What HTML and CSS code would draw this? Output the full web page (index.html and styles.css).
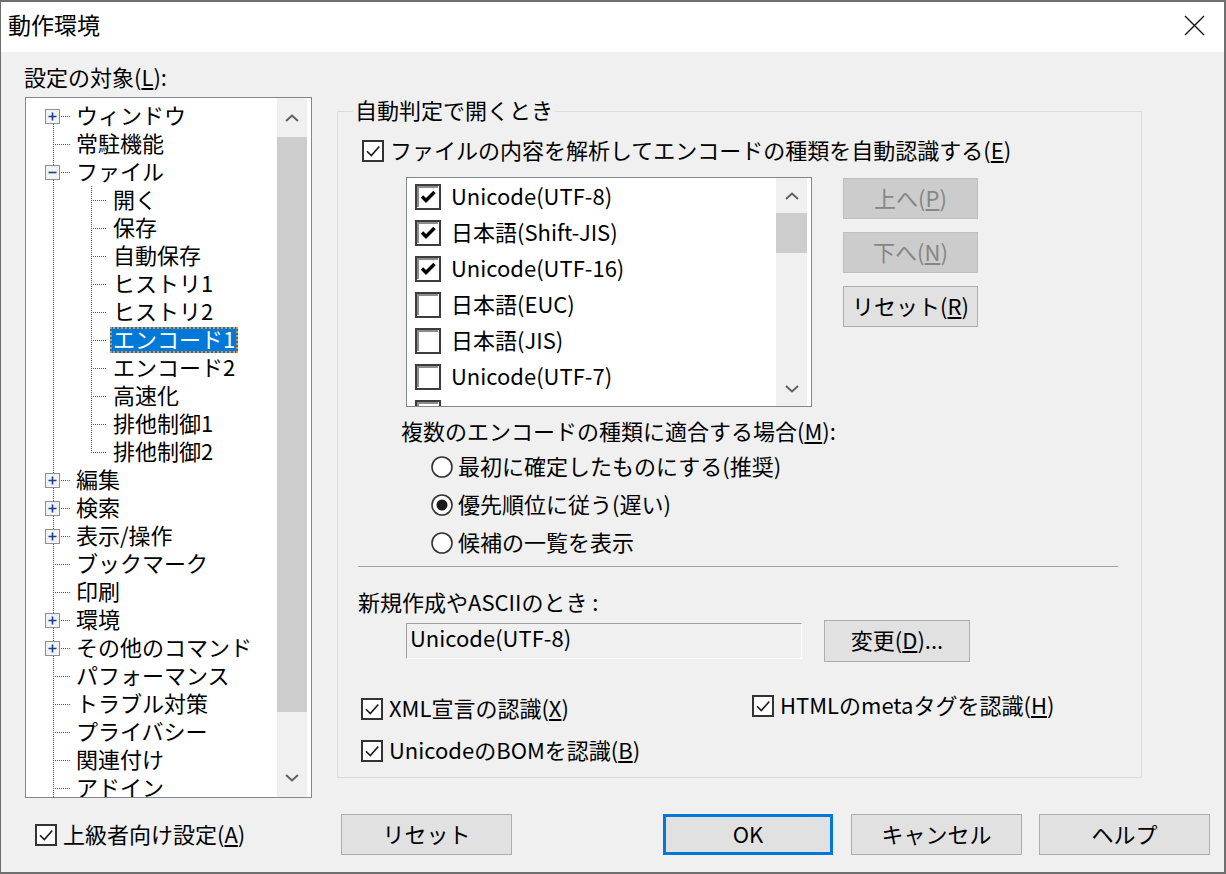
FILE: index.html
```html
<!DOCTYPE html>
<html lang="ja">

<head>
    <meta charset="UTF-8">
    <title>動作環境</title>
    <link rel="stylesheet" href="styles.css">
</head>

<body>
    <svg class="defs" width="0" height="0">
        <symbol id="cb-on" viewBox="0 0 22 22">
            <rect x="1" y="1" width="20" height="20" fill="#fff" stroke="#333" stroke-width="2"/>
            <path d="M5 11.2L9.3 15.5L17.3 6.5" fill="none" stroke="#1a1a1a" stroke-width="1.6"/>
        </symbol>
        <symbol id="cb3d-on" viewBox="0 0 26 26">
            <rect x="1" y="1" width="24" height="24" fill="#fff" stroke="#3c3c3c" stroke-width="2"/>
            <path d="M3 23V3H23" fill="none" stroke="#8c8c8c" stroke-width="2"/>
            <path d="M7 12.5L11 16.5L19.5 8" fill="none" stroke="#000" stroke-width="3.4"/>
        </symbol>
        <symbol id="cb3d-off" viewBox="0 0 26 26">
            <rect x="1" y="1" width="24" height="24" fill="#fff" stroke="#3c3c3c" stroke-width="2"/>
            <path d="M3 23V3H23" fill="none" stroke="#8c8c8c" stroke-width="2"/>
        </symbol>
        <symbol id="radio-off" viewBox="0 0 22 22">
            <circle cx="11" cy="11" r="10" fill="#fff" stroke="#333" stroke-width="1.6"/>
        </symbol>
        <symbol id="radio-on" viewBox="0 0 22 22">
            <circle cx="11" cy="11" r="10" fill="#fff" stroke="#333" stroke-width="1.6"/>
            <circle cx="11" cy="11" r="5.5" fill="#1a1a1a"/>
        </symbol>
        <symbol id="plus" viewBox="0 0 15 15">
            <rect x="0.5" y="0.5" width="14" height="14" fill="#f3f3f3" stroke="#8e8f8f"/>
            <path d="M3.5 7.5h8M7.5 3.5v8" stroke="#1f3d8f" stroke-width="1.6"/>
        </symbol>
        <symbol id="minus" viewBox="0 0 15 15">
            <rect x="0.5" y="0.5" width="14" height="14" fill="#f3f3f3" stroke="#8e8f8f"/>
            <path d="M3.5 7.5h8" stroke="#1f3d8f" stroke-width="1.6"/>
        </symbol>
        <symbol id="chev-up" viewBox="0 0 14 8">
            <path d="M1 7L7 1.5L13 7" fill="none" stroke="#606060" stroke-width="2"/>
        </symbol>
        <symbol id="chev-down" viewBox="0 0 14 8">
            <path d="M1 1L7 6.5L13 1" fill="none" stroke="#606060" stroke-width="2"/>
        </symbol>
    </svg>

    <div class="window">
        <div class="titlebar">
            <span class="title">動作環境</span>
            <span class="close">
                <svg width="21" height="21" viewBox="0 0 21 21"><path d="M1 1L20 20M20 1L1 20" stroke="#111" stroke-width="1.4"/></svg>
            </span>
        </div>

        <div class="body">
            <div class="main">
                <div class="left">
                    <div class="caption">設定の対象(<u>L</u>):</div>
                    <div class="tree">
                        <div class="tree-list">
                            <div class="node"><span class="g1 top"><svg class="exp"><use href="#plus"/></svg></span><span class="text">ウィンドウ</span></div>
                            <div class="node"><span class="g1"></span><span class="text">常駐機能</span></div>
                            <div class="node"><span class="g1"><svg class="exp"><use href="#minus"/></svg></span><span class="text">ファイル</span></div>
                            <div class="node"><span class="g1 pass"></span><span class="g2"></span><span class="text">開く</span></div>
                            <div class="node"><span class="g1 pass"></span><span class="g2"></span><span class="text">保存</span></div>
                            <div class="node"><span class="g1 pass"></span><span class="g2"></span><span class="text">自動保存</span></div>
                            <div class="node"><span class="g1 pass"></span><span class="g2"></span><span class="text">ヒストリ1</span></div>
                            <div class="node"><span class="g1 pass"></span><span class="g2"></span><span class="text">ヒストリ2</span></div>
                            <div class="node sel"><span class="g1 pass"></span><span class="g2"></span><span class="text">エンコード1</span></div>
                            <div class="node"><span class="g1 pass"></span><span class="g2"></span><span class="text">エンコード2</span></div>
                            <div class="node"><span class="g1 pass"></span><span class="g2"></span><span class="text">高速化</span></div>
                            <div class="node"><span class="g1 pass"></span><span class="g2"></span><span class="text">排他制御1</span></div>
                            <div class="node"><span class="g1 pass"></span><span class="g2 last"></span><span class="text">排他制御2</span></div>
                            <div class="node"><span class="g1"><svg class="exp"><use href="#plus"/></svg></span><span class="text">編集</span></div>
                            <div class="node"><span class="g1"><svg class="exp"><use href="#plus"/></svg></span><span class="text">検索</span></div>
                            <div class="node"><span class="g1"><svg class="exp"><use href="#plus"/></svg></span><span class="text">表示/操作</span></div>
                            <div class="node"><span class="g1"></span><span class="text">ブックマーク</span></div>
                            <div class="node"><span class="g1"></span><span class="text">印刷</span></div>
                            <div class="node"><span class="g1"><svg class="exp"><use href="#plus"/></svg></span><span class="text">環境</span></div>
                            <div class="node"><span class="g1"><svg class="exp"><use href="#plus"/></svg></span><span class="text">その他のコマンド</span></div>
                            <div class="node"><span class="g1"></span><span class="text">パフォーマンス</span></div>
                            <div class="node"><span class="g1"></span><span class="text">トラブル対策</span></div>
                            <div class="node"><span class="g1"></span><span class="text">プライバシー</span></div>
                            <div class="node"><span class="g1"></span><span class="text">関連付け</span></div>
                            <div class="node"><span class="g1"></span><span class="text">アドイン</span></div>
                        </div>
                        <div class="vscroll tree-scroll">
                            <div class="sb-btn"><svg class="chev"><use href="#chev-up"/></svg></div>
                            <div class="sb-thumb"></div>
                            <div class="sb-track"></div>
                            <div class="sb-btn"><svg class="chev"><use href="#chev-down"/></svg></div>
                        </div>
                    </div>
                </div>

                <fieldset class="group">
                    <legend>自動判定で開くとき</legend>

                    <div class="check auto-detect">
                        <svg class="cb"><use href="#cb-on"/></svg>
                        <span>ファイルの内容を解析してエンコードの種類を自動認識する(<u>E</u>)</span>
                    </div>

                    <div class="enc-row">
                        <div class="listbox">
                            <div class="list-items">
                                <div class="item"><svg class="cb3d"><use href="#cb3d-on"/></svg><span>Unicode(UTF-8)</span></div>
                                <div class="item"><svg class="cb3d"><use href="#cb3d-on"/></svg><span>日本語(Shift-JIS)</span></div>
                                <div class="item"><svg class="cb3d"><use href="#cb3d-on"/></svg><span>Unicode(UTF-16)</span></div>
                                <div class="item"><svg class="cb3d"><use href="#cb3d-off"/></svg><span>日本語(EUC)</span></div>
                                <div class="item"><svg class="cb3d"><use href="#cb3d-off"/></svg><span>日本語(JIS)</span></div>
                                <div class="item"><svg class="cb3d"><use href="#cb3d-off"/></svg><span>Unicode(UTF-7)</span></div>
                                <div class="item"><svg class="cb3d"><use href="#cb3d-off"/></svg></div>
                            </div>
                            <div class="vscroll list-scroll">
                                <div class="sb-btn"><svg class="chev"><use href="#chev-up"/></svg></div>
                                <div class="sb-thumb"></div>
                                <div class="sb-track"></div>
                                <div class="sb-btn"><svg class="chev"><use href="#chev-down"/></svg></div>
                            </div>
                        </div>
                        <div class="enc-buttons">
                            <button class="btn" disabled>上へ(<u>P</u>)</button>
                            <button class="btn" disabled>下へ(<u>N</u>)</button>
                            <button class="btn">リセット(<u>R</u>)</button>
                        </div>
                    </div>

                    <div class="multi-caption">複数のエンコードの種類に適合する場合(<u>M</u>):</div>
                    <div class="radios">
                        <div class="radio"><svg class="rb"><use href="#radio-off"/></svg><span>最初に確定したものにする(推奨)</span></div>
                        <div class="radio"><svg class="rb"><use href="#radio-on"/></svg><span>優先順位に従う(遅い)</span></div>
                        <div class="radio"><svg class="rb"><use href="#radio-off"/></svg><span>候補の一覧を表示</span></div>
                    </div>

                    <div class="sep"></div>

                    <div class="new-caption">新規作成やASCIIのとき :</div>
                    <div class="new-row">
                        <div class="textbox">Unicode(UTF-8)</div>
                        <button class="btn change">変更(<u>D</u>)...</button>
                    </div>

                    <div class="opts">
                        <div class="check"><svg class="cb"><use href="#cb-on"/></svg><span>XML宣言の認識(<u>X</u>)</span></div>
                        <div class="check raised"><svg class="cb"><use href="#cb-on"/></svg><span>HTMLのmetaタグを認識(<u>H</u>)</span></div>
                        <div class="check"><svg class="cb"><use href="#cb-on"/></svg><span>UnicodeのBOMを認識(<u>B</u>)</span></div>
                    </div>
                </fieldset>
            </div>

            <div class="footer">
                <div class="check advanced"><svg class="cb"><use href="#cb-on"/></svg><span>上級者向け設定(<u>A</u>)</span></div>
                <button class="btn wide">リセット</button>
                <button class="btn wide ok">OK</button>
                <button class="btn wide">キャンセル</button>
                <button class="btn wide">ヘルプ</button>
            </div>
        </div>
    </div>
</body>

</html>
```

FILE: styles.css
```css
html,
body {
    margin: 0;
    padding: 0;
}

body {
    width: 1226px;
    height: 874px;
    font-family: "Noto Sans CJK JP", "Noto Sans", sans-serif;
    font-size: 22px;
    color: #000;
    background-color: #f0f0f0;
}

u {
    text-underline-offset: 2px;
}

.defs {
    display: block;
    width: 0;
    height: 0;
    overflow: hidden;
}

.window {
    box-sizing: border-box;
    width: 1226px;
    height: 874px;
    border: 2px solid #6e6e6e;
    border-left-width: 1px;
    background-color: #f0f0f0;
    overflow: hidden;
}

.titlebar {
    height: 50px;
    background-color: #fff;
    display: flex;
    align-items: center;
    justify-content: space-between;
    padding-left: 7px;
}

.title {
    font-size: 23px;
    line-height: 30px;
    margin-top: -6px;
}

.close {
    width: 60px;
    display: flex;
    justify-content: center;
    margin-top: -4px;
}

.body {
    padding: 12px 0 0 24px;
}

.main {
    display: flex;
    align-items: flex-start;
}

/* left side: tree */

.left {
    width: 287px;
}

.caption {
    line-height: 24px;
    padding-bottom: 4px;
    margin-left: -1px;
}

.tree {
    margin-top: 5px;
    height: 701px;
    box-sizing: border-box;
    border: 1px solid #828790;
    background-color: #fff;
    display: flex;
    padding-right: 4px;
}

.tree-list {
    flex: 1;
    padding-top: 4px;
    overflow: hidden;
}

.node {
    display: flex;
    align-items: center;
    height: 28px;
    white-space: nowrap;
}

.g1,
.g2 {
    flex: none;
    height: 28px;
    display: flex;
    align-items: center;
    background-repeat: no-repeat;
    background-image:
        repeating-linear-gradient(#555 0 1px, transparent 1px 2px),
        repeating-linear-gradient(90deg, #555 0 1px, transparent 1px 2px);
}

.g1 {
    width: 50px;
    background-size: 1px 100%, 17px 1px;
    background-position: 27px 0, 27px 14px;
}

.g1.top {
    background-size: 1px 50%, 17px 1px;
    background-position: 27px 100%, 27px 14px;
}

.g1.pass {
    background-size: 1px 100%, 0 0;
}

.g2 {
    width: 37px;
    background-size: 1px 100%, 16px 1px;
    background-position: 15px 0, 15px 14px;
}

.g2.last {
    background-size: 1px 50%, 16px 1px;
    background-position: 15px 0, 15px 14px;
}

.exp {
    width: 15px;
    height: 15px;
    margin-left: 19px;
}

.node .text {
    padding: 0 3px 3px;
    margin-left: -3px;
    line-height: 23px;
}

.node.sel .text {
    background-color: #0078d7;
    color: #fff;
    outline: 2px dotted #f0902a;
    outline-offset: -2px;
}

/* scrollbars */

.vscroll {
    display: flex;
    flex-direction: column;
    background-color: #f0f0f0;
}

.tree-scroll {
    width: 30px;
}

.list-scroll {
    width: 31px;
}

.sb-btn {
    display: flex;
    align-items: center;
    justify-content: center;
}

.tree-scroll .sb-btn {
    height: 39px;
}

.list-scroll .sb-btn {
    height: 35px;
}

.sb-thumb {
    background-color: #cdcdcd;
}

.tree-scroll .sb-thumb {
    height: 575px;
}

.list-scroll .sb-thumb {
    height: 40px;
}

.sb-track {
    flex: 1;
}

.chev {
    width: 14px;
    height: 8px;
}

/* right side: group */

.group {
    box-sizing: border-box;
    width: 805px;
    height: 681px;
    margin: 33px 0 0 25px;
    padding: 0;
    min-width: 0;
    border: 1px solid #dcdcdc;
}

.group legend {
    margin-left: 15px;
    padding: 0 2px 4px;
    line-height: 24px;
}

.check {
    display: flex;
    align-items: center;
    gap: 6px;
    height: 28px;
    white-space: nowrap;
}

.check span,
.radio span,
.item span {
    padding-bottom: 4px;
}

.cb {
    width: 22px;
    height: 22px;
    flex: none;
}

.auto-detect {
    margin: 12px 0 0 24px;
}

.enc-row {
    display: flex;
    margin: 12px 0 0 68px;
}

.listbox {
    box-sizing: border-box;
    width: 406px;
    height: 230px;
    border: 1px solid #828790;
    background-color: #fff;
    display: flex;
    padding-right: 4px;
}

.list-items {
    flex: 1;
    padding: 1px 0 0 8px;
    overflow: hidden;
}

.item {
    display: flex;
    align-items: center;
    gap: 10px;
    height: 36px;
    white-space: nowrap;
}

.cb3d {
    width: 26px;
    height: 26px;
    flex: none;
}

.enc-buttons {
    display: flex;
    flex-direction: column;
    gap: 13px;
    margin-left: 31px;
    padding-top: 1px;
}

.btn {
    box-sizing: border-box;
    width: 135px;
    height: 41px;
    padding: 0 0 4px;
    border: 1px solid #adadad;
    background-color: #e1e1e1;
    font: inherit;
    color: #000;
    line-height: 1;
    display: flex;
    align-items: center;
    justify-content: center;
}

.btn:disabled {
    background-color: #cccccc;
    border-color: #bfbfbf;
    color: #868686;
}

.multi-caption {
    margin: 9px 0 0 63px;
    line-height: 28px;
    padding-bottom: 2px;
}

.radios {
    margin: 2px 0 0 93px;
}

.radio {
    display: flex;
    align-items: center;
    gap: 5px;
    height: 38px;
    white-space: nowrap;
}

.rb {
    width: 22px;
    height: 22px;
    flex: none;
}

.sep {
    margin: 4px 0 0 20px;
    width: 760px;
    border-top: 1px solid #a0a0a0;
}

.new-caption {
    margin: 20px 0 0 20px;
    line-height: 28px;
    padding-bottom: 2px;
}

.new-row {
    display: flex;
    align-items: center;
    height: 42px;
    margin: 3px 0 0 68px;
}

.textbox {
    box-sizing: border-box;
    width: 396px;
    height: 36px;
    padding: 0 3px;
    line-height: 26px;
    border: 1px solid;
    border-color: #a0a0a0 #fff #fff #a0a0a0;
    background-color: #f0f0f0;
}

.btn.change {
    width: 146px;
    height: 42px;
    margin-left: 22px;
}

.opts {
    display: grid;
    grid-template-columns: 391px auto;
    row-gap: 14px;
    margin: 33px 0 0 23px;
}

.opts .raised {
    margin-top: -3px;
}

/* bottom buttons */

.footer {
    display: flex;
    align-items: center;
    height: 41px;
    margin-top: 16px;
}

.advanced {
    width: 306px;
    margin-left: 10px;
}

.btn.wide {
    width: 171px;
}

.btn.ok {
    width: 170px;
    margin-left: 151px;
    margin-right: 18px;
    border: 3px solid #0078d7;
}

.footer .btn.ok + .btn {
    margin-right: 17px;
}
```
